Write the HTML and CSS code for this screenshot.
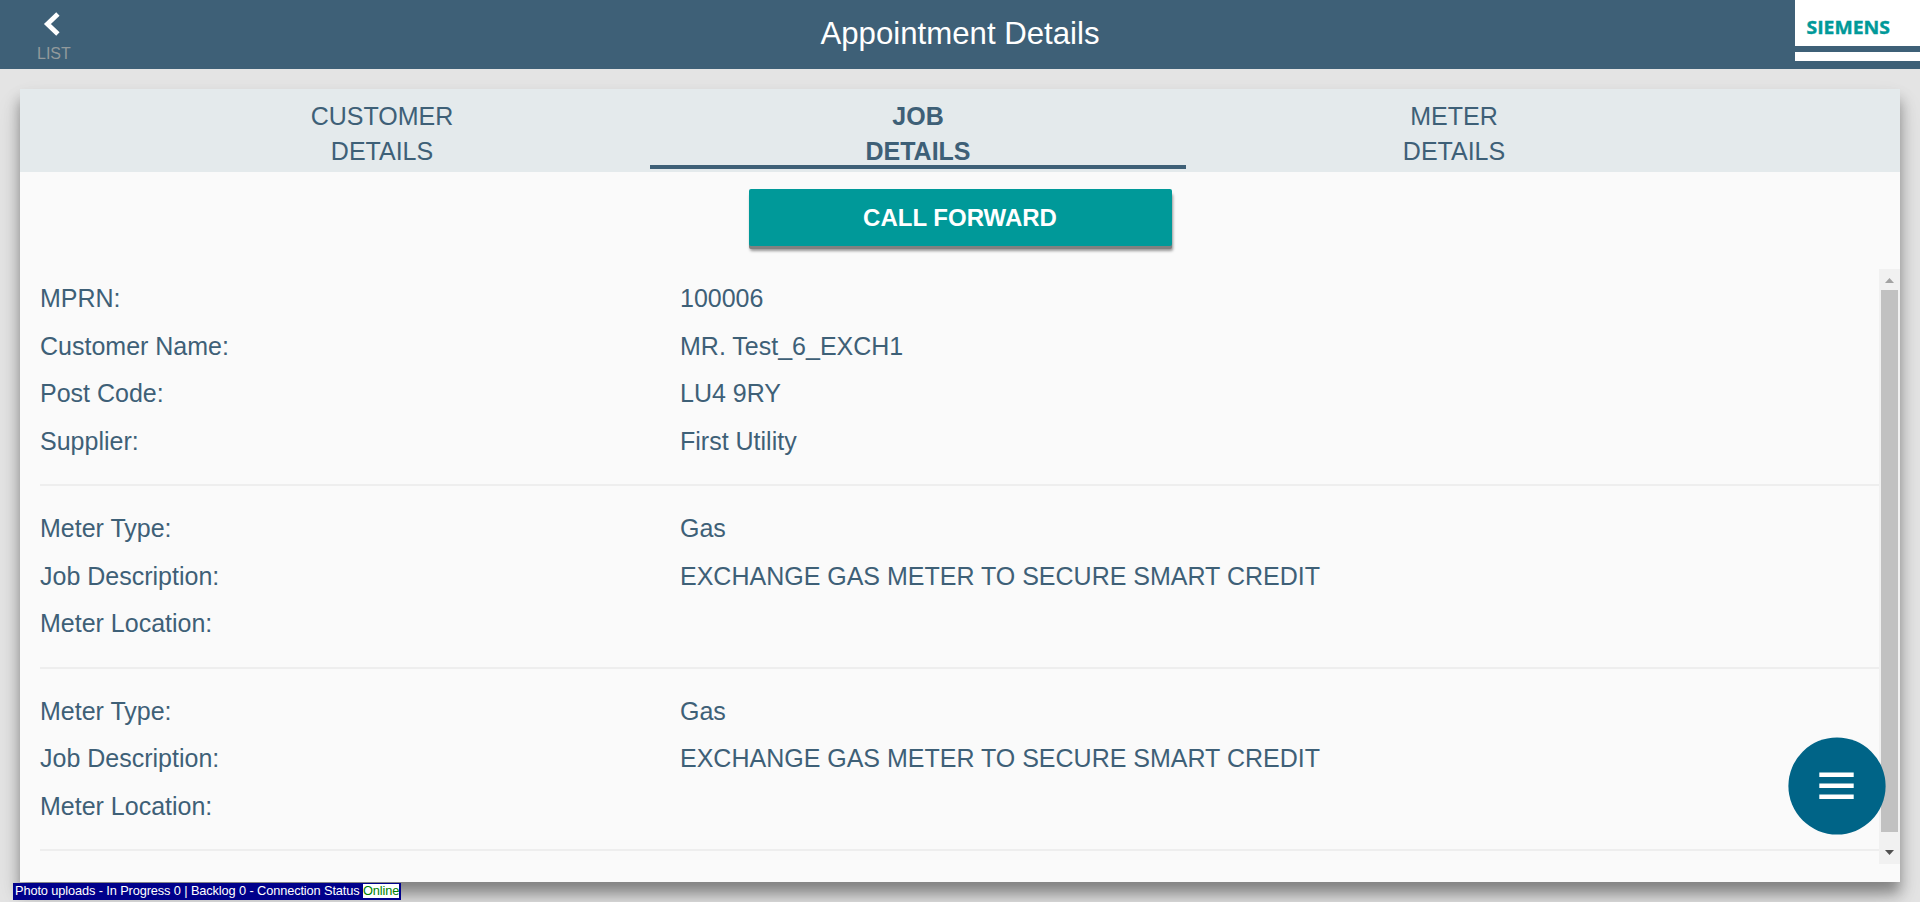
FILE: index.html
```html
<!DOCTYPE html>
<html lang="en">
<head>
<meta charset="utf-8">
<title>Appointment Details</title>
<link rel="stylesheet" href="styles.css">
</head>
<body>
<header class="topbar">
  <a class="back">
    <svg class="back-icon" width="18" height="26" viewBox="0 0 18 26"><path d="M15.900 2.900 5.400 13l10.500 10.100" fill="none" stroke="#fff" stroke-width="4.800"/></svg>
    <span>LIST</span>
  </a>
  <h1 class="title">Appointment Details</h1>
  <div class="logo">
    <svg width="125" height="46" viewBox="0 0 125 46"><text class="logo-text" x="11.5" y="33.5" textLength="83.5" lengthAdjust="spacingAndGlyphs">SIEMENS</text></svg>
    <div class="logo-line"></div>
  </div>
</header>
<main class="card">
  <nav class="tabs">
    <a class="tab">CUSTOMER<br>DETAILS</a>
    <a class="tab active">JOB<br>DETAILS</a>
    <a class="tab">METER<br>DETAILS</a>
  </nav>
  <div class="actions"><button class="call">CALL FORWARD</button></div>
  <div class="scroll">
    <div class="content">
      <dl class="group">
        <dt>MPRN:</dt><dd>100006</dd>
        <dt>Customer Name:</dt><dd>MR. Test_6_EXCH1</dd>
        <dt>Post Code:</dt><dd>LU4 9RY</dd>
        <dt>Supplier:</dt><dd>First Utility</dd>
      </dl>
      <dl class="group">
        <dt>Meter Type:</dt><dd>Gas</dd>
        <dt>Job Description:</dt><dd>EXCHANGE GAS METER TO SECURE SMART CREDIT</dd>
        <dt>Meter Location:</dt><dd></dd>
      </dl>
      <dl class="group">
        <dt>Meter Type:</dt><dd>Gas</dd>
        <dt>Job Description:</dt><dd>EXCHANGE GAS METER TO SECURE SMART CREDIT</dd>
        <dt>Meter Location:</dt><dd></dd>
      </dl>
    </div>
    <div class="scrollbar">
      <svg width="21" height="21" viewBox="0 0 21 21"><path d="M6 14 10.5 9 15 14z" fill="#a3a3a3"/></svg>
      <div class="thumb"></div>
      <svg width="21" height="32" viewBox="0 0 21 32"><path d="M6 18h9l-4.500 5z" fill="#505050"/></svg>
    </div>
  </div>
</main>
<svg class="fab" width="98" height="98" viewBox="0 0 98 98" role="img" aria-label="Menu">
  <circle cx="49" cy="49" r="48.600" fill="#006487"/>
  <path d="M31.300 35.500h34.400v4.600H31.300zM31.300 46.500h34.400v4.600H31.300zM31.300 57.500h34.400v4.600H31.300z" fill="#fff"/>
</svg>
<div class="status">Photo uploads - In Progress 0 | Backlog 0 - Connection Status <span class="online">Online</span></div>
</body>
</html>
```

FILE: styles.css
```css
* { box-sizing: border-box; }
body {
  margin: 0;
  height: 902px;
  overflow: hidden;
  background: #e4e4e4;
  color: #3e6077;
  font-family: "Liberation Sans", Arial, sans-serif;
}
.topbar {
  display: grid;
  grid-template-columns: 125px 1fr 125px;
  height: 69px;
  background: #3e6077;
}
.back {
  display: flex;
  flex-direction: column;
  align-items: flex-start;
  padding: 11px 0 0 37px;
  color: #929a9c;
  font-size: 16px;
  line-height: 20px;
}
.back-icon { display: block; margin: 0 0 7px 5px; }
.title {
  margin: 0;
  color: #fff;
  font-size: 31.200px;
  font-weight: 400;
  line-height: 67px;
  text-align: center;
}
.logo { height: 61px; background: #fff; }
.logo svg { display: block; }
.logo-text { fill: #099; stroke: #099; stroke-width: .4px; font: bold 18px "Open Sans", sans-serif; }
.logo-line { height: 5.500px; background: #3e6077; }
.card {
  display: flex;
  flex-direction: column;
  height: 793px;
  margin: 20px 20px 0;
  background: #fafafa;
  box-shadow: 0 11px 13px rgba(0, 0, 0, .36), 0 16px 26px rgba(0, 0, 0, .12);
}
.tabs {
  display: flex;
  height: 83px;
  padding: 0 172px 0 94px;
  background: #e4eaec;
}
.tab {
  width: 536px;
  height: 80px;
  padding-top: 10px;
  border-bottom: 4px solid transparent;
  font-size: 25px;
  line-height: 35px;
  text-align: center;
}
.tab.active { border-color: #3e6077; font-weight: 700; }
.actions { display: flex; justify-content: center; height: 97px; padding-top: 17px; }
.call {
  width: 423px;
  height: 57px;
  padding: 0;
  border: 0;
  border-radius: 2px;
  background: #099;
  box-shadow: 0 3px 0 #808080, 1px 5px 3px rgba(0, 0, 0, .4);
  color: #fff;
  font: bold 24px "Liberation Sans", Arial, sans-serif;
}
.scroll { display: flex; height: 595px; }
.content { flex: 1; padding: 6px 0 0 20px; }
.group {
  display: grid;
  grid-template-columns: 640px 1fr;
  grid-auto-rows: 47.600px;
  margin: 0 0 19px;
  padding-bottom: 18.700px;
  border-bottom: 2px solid #eee;
  font-size: 25px;
  line-height: 47.600px;
}
.group dt, .group dd { margin: 0; }
.scrollbar {
  display: flex;
  flex-direction: column;
  width: 21px;
  background: #f1f1f1;
}
.scrollbar svg { display: block; }
.thumb { flex: 1; margin: 0 2px; background: #c1c1c1; }
.fab {
  position: absolute;
  top: 737px;
  left: 1788px;
}
.status {
  position: absolute;
  top: 883px;
  left: 13px;
  height: 17px;
  padding: 1px 2px;
  background: #00008b;
  color: #fff;
  font-size: 12.800px;
  letter-spacing: -.12px;
  line-height: 14px;
  white-space: nowrap;
}
.online { display: inline-block; background: #fff; color: green; }
```
